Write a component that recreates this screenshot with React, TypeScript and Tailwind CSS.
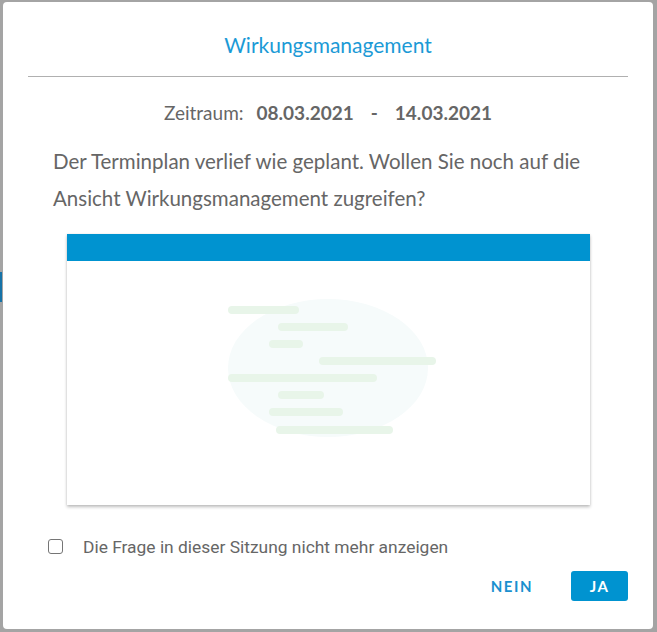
import React from "react";

const BARS = [
  { x: 161, y: 49, w: 71 },
  { x: 211, y: 66, w: 70 },
  { x: 202, y: 83, w: 34 },
  { x: 252, y: 100, w: 117 },
  { x: 161, y: 117, w: 149 },
  { x: 211, y: 134, w: 46 },
  { x: 202, y: 151, w: 74 },
  { x: 209, y: 169, w: 117 },
];

const Illustration = () => (
  <svg width="523" height="244" viewBox="0 0 523 244" className="block">
    <defs>
      <filter id="soft" x="-10%" y="-10%" width="120%" height="120%">
        <feGaussianBlur stdDeviation="0.6" />
      </filter>
    </defs>
    <g filter="url(#soft)">
      <ellipse cx="261" cy="107" rx="100" ry="69" fill="#f6fbfb" />
      {BARS.map((b, i) => (
        <rect key={i} x={b.x} y={b.y - 4} width={b.w} height="8" rx="4" fill="#e8f5e9" />
      ))}
    </g>
  </svg>
);

const App = () => {
  return (
    <div className="flex h-[632px] w-[657px] bg-[#a4a4a4] font-['Lato','Open_Sans',sans-serif]">
      <div className="flex w-[3px] flex-col">
        <div className="h-[272px]" />
        <div className="h-[30px] w-[2px] bg-[#1673a8]" />
      </div>
      <div className="mt-[2px] flex h-[627px] w-[650px] flex-col rounded-[4px] bg-white px-[25px]">
        <h2 className="mt-[31px] h-6 text-center text-[21px] leading-6 text-[#1b9ad6]">
          Wirkungsmanagement
        </h2>
        <div className="mt-[19px] h-px bg-[#b0b0b0]" />

        <div className="mt-[24px] flex h-6 items-center justify-center text-[19px] leading-6 text-[#666]">
          <span>Zeitraum:</span>
          <span className="ml-[13px] font-bold">08.03.2021</span>
          <span className="mx-[17px] font-bold">-</span>
          <span className="font-bold">14.03.2021</span>
        </div>

        <p className="mt-[18px] w-[570px] pl-[25px] text-[20.5px] leading-[37px] text-[#666]">
          Der Terminplan verlief wie geplant. Wollen Sie noch auf die Ansicht Wirkungsmanagement
          zugreifen?
        </p>

        <div className="ml-[39px] mt-[17px] flex h-[271px] w-[523px] flex-col bg-white shadow-[0_2px_3px_rgba(0,0,0,0.25),0_0_2px_rgba(0,0,0,0.08)]">
          <div className="h-[27px] bg-[#0093d0]" />
          <div className="flex flex-1 items-start">
            <Illustration />
          </div>
        </div>

        <label className="mt-[29px] flex h-6 items-center font-['Roboto',sans-serif] text-[17.4px] text-[#666]">
          <span className="ml-[20px] h-[15px] w-[15px] rounded-[3px] border border-[#757575] bg-white" />
          <span className="ml-[20px] mt-[3px]">Die Frage in dieser Sitzung nicht mehr anzeigen</span>
        </label>

        <div className="mt-[13px] flex items-center justify-end gap-[19px]">
          <button className="h-[30px] px-[19px] text-[15px] font-bold tracking-[1.5px] text-[#1a90cf]">
            NEIN
          </button>
          <button className="h-[30px] w-[57px] rounded-[3px] bg-[#0093d0] text-[15px] font-bold tracking-[1.5px] text-white">
            JA
          </button>
        </div>
      </div>
    </div>
  );
};

export default App;
